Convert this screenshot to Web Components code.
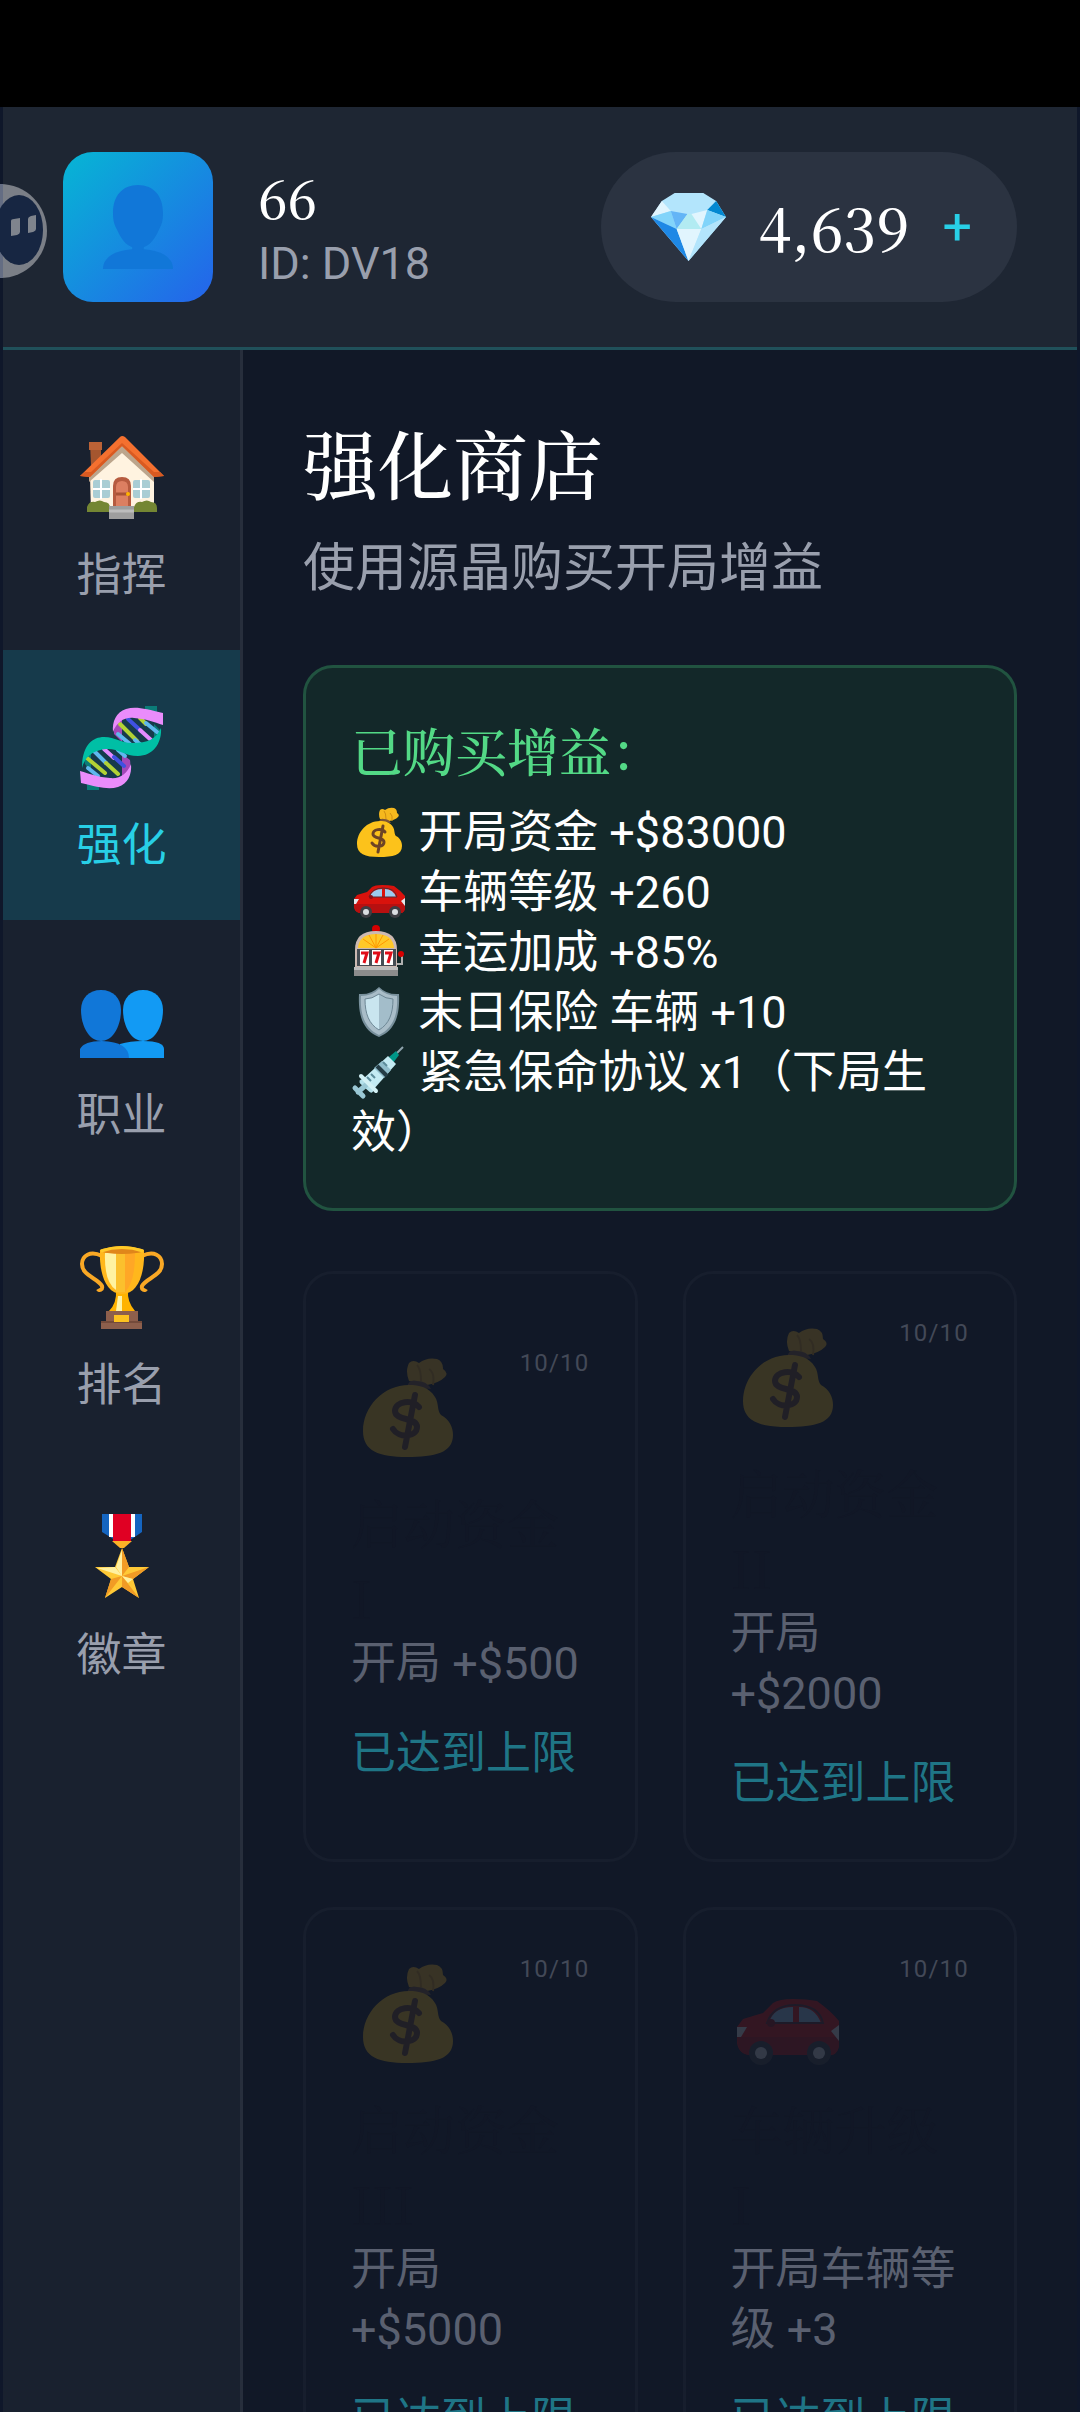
<!DOCTYPE html>
<html lang="zh-CN">
<head>
<meta charset="utf-8">
<meta name="viewport" content="width=device-width, initial-scale=1">
<title>强化商店</title>
<style>
  :root {
    --serif: "Noto Serif CJK SC", "Liberation Serif", "Noto Sans CJK SC", serif;
    --sans: Roboto, "Noto Sans CJK SC", sans-serif;
    --bg: #111827;
    --muted: #999fad;
    --cyan: #28cfe6;
  }
  html, body { height: 100%; }
  body {
    margin: 0;
    background: #0f172a;
    color: #fff;
    font: 45px/60px var(--sans);
  }
</style>
</head>
<body>
<game-app></game-app>

<script>
  const ICONS = {
    user: { box: "0 0 84 84", art: `
      <g fill="#1177d8"><path d="M42 0c19 0 30 11 30 28 0 9-2 12-5 17C61 56 54 63 42 63S23 56 17 45c-3-5-5-8-5-17C12 11 23 0 42 0z"/>
      <path d="M35 60h14v8H35z"/><path d="M0 84C0 70 20 64 42 64s42 6 42 20z"/></g>` },
    gem: { box: "0 0 76 70", art: `
      <path d="M24 1h29l13 8 10 16-38 44L0 25 11 9z" fill="#b3e5fc"/>
      <path d="M11 9l9 10L0 25z" fill="#e1f5fe"/>
      <path d="M0 25l20-6 6 18z" fill="#82d4fa"/>
      <path d="M20 19l17 3-11 15z" fill="#64b5f6"/>
      <path d="M37 22L26 37h25L43 22z" fill="#b2ebf2"/>
      <path d="M41 22l16-4-6 19z" fill="#e1f5fe"/>
      <path d="M66 9l10 16-19-7z" fill="#0288d1"/>
      <path d="M57 18l19 7-25 12z" fill="#81d4fa"/>
      <path d="M0 25l26 12 12 32z" fill="#1e88e5"/>
      <path d="M26 37h25L38 69z" fill="#e1f5fe"/>
      <path d="M51 37l25-12-38 44z" fill="#b3e5fc"/>` },
    home: { box: "0 0 84 84", art: `
      <path d="M10 7h11v22H11z" fill="#a5562f"/><path d="M9 6h13v8H9z" fill="#bb6236"/>
      <path d="M10 40L42 11l32 29v36H11z" fill="#fff3e0"/>
      <path d="M9 46V37L42 8l32 30v8L42 17z" fill="#bca58c"/>
      <path d="M0 40L40 1q2-2 5 0l39 39-10 1-32-31L10 41z" fill="#f4702f"/>
      <path d="M0 40l5-4h6l31-29 32 29h6l4 4-10 1-32-31L10 41z" fill="#d95a21"/>
      <g fill="#a9cdd4"><rect x="13" y="44" width="17" height="18" rx="2"/><rect x="53" y="44" width="17" height="18" rx="2"/></g>
      <path d="M21 43v20M13 53h17M61 43v20M53 53h17" stroke="#fff" stroke-width="2"/>
      <path d="M33 71V50q0-9 9-9t9 9v21z" fill="#b65b3f"/>
      <path d="M36 70V51q0-6 6-6t6 6v19z" fill="#dc7f61"/>
      <path d="M36 58h12" stroke="#a85336" stroke-width="3"/><circle cx="48" cy="58" r="2" fill="#ffb300"/>
      <path d="M7 76v-5q2-6 8-5 5-3 9 0 6 0 6 6v4zM54 76v-5q2-6 8-5 5-3 9 0 6 0 6 6v4z" fill="#748633"/>
      <path d="M29 70h25v13H29z" fill="#9e9e9e"/><path d="M29 75h25" stroke="#bdbdbd" stroke-width="3"/>` },
    dna: { box: "0 0 84 84", art: `
      <path d="M65 0h12v10H65zM7 74h12v10H7z" fill="#0b7c78"/>
      <path d="M5 58q-2-8 6-14v22zM80 24q1 9-6 14V18z" fill="#0b7c78"/>
      <path d="M34 28q-1-12 8-16v24zM50 54q2 12-8 18V48z" fill="#a347b8"/>
      <g stroke-width="4" stroke-linecap="round">
        <path d="M40 18l17 17" stroke="#b2d235"/><path d="M38 28l12 10M55 34l6 5" stroke="#5fb8ee"/>
        <path d="M48 13l13 12" stroke="#3f51e0"/><path d="M60 24l11 10" stroke="#e58bff"/>
        <path d="M60 12l6 6" stroke="#b2d235"/><path d="M66 17l11 9" stroke="#5fb8ee"/>
        <path d="M7 52l18 15" stroke="#b2d235"/><path d="M8 62l10 8" stroke="#5fb8ee"/>
        <path d="M13 44l13 13" stroke="#5fb8ee"/><path d="M26 57l12 11" stroke="#b2d235"/>
        <path d="M24 43l10 9" stroke="#e58bff"/><path d="M34 51l10 9" stroke="#3f51e0"/><path d="M38 44l7 6" stroke="#5fb8ee"/>
      </g>
      <path d="M83 7C66 3 56 0 46 3 36 6 32 16 33 26 37 16 44 11 54 12c12 1 20 4 29 7z" fill="#ea8cfb"/>
      <path d="M1 77c17 4 27 7 37 4s14-13 13-23c-4 10-11 15-21 14-12-1-20-4-30-7z" fill="#ea8cfb"/>
      <path d="M2 62C2 40 12 31 24 31s16 6 28 6c16 0 24-4 29-15 1 14-7 28-23 28-14 0-20-8-32-7S5 50 2 62z" fill="#00bfa5"/>` },
    people: { box: "0 0 84 84", art: `
      <g fill="#129af4"><path d="M63 14c12 0 20 8 20 20 0 16-8 31-20 31S43 50 43 34c0-12 8-20 20-20z"/><path d="M40 82V68q10-3 23-3 21 0 21 8v9z"/></g>
      <g fill="#1177d8"><path d="M21 14c12 0 20 8 20 20 0 16-8 31-20 31S1 50 1 34c0-12 8-20 20-20z"/><path d="M0 82v-9q4-8 22-8 27 1 27 17z"/></g>` },
    trophy: { box: "0 0 84 84", art: `
      <g fill="none" stroke="#f9a825" stroke-width="4"><path d="M22 10C10 4 2 10 2 18c0 12 16 14 20 22 1 4-3 5-4 3M62 10c12-6 20 0 20 8 0 12-16 14-20 22-1 4 3 5 4 3"/></g>
      <path d="M36 44h12q-1 12 7 21H29q8-8 7-21z" fill="#ffb300"/><path d="M38 50h4v15h-6z" fill="#fff3a8"/>
      <path d="M20 4q22-8 44 0c1 24-6 44-22 44S19 28 20 4z" fill="#ffb71c"/>
      <path d="M25 7h11v37Q24 36 25 7z" fill="#fff2a0"/><path d="M36 7h9v39h-9z" fill="#fbc02d"/><path d="M45 7h10q0 30-10 39z" fill="#ffa726"/>
      <ellipse cx="42" cy="5" rx="20" ry="3" fill="#e0861a"/><path d="M21 5q21-7 42 0" fill="none" stroke="#ffca28" stroke-width="3"/>
      <path d="M26 65h32v10h4v8H21v-8h5z" fill="#8d5f4c"/><path d="M21 76h41" stroke="#744b3b" stroke-width="2"/>
      <rect x="34" y="69" width="15" height="7" fill="#fdc21f"/>` },
    medal: { box: "0 2 84 84", art: `
      <path d="M22 0h40v18l-19 13L22 18z" fill="#1565c0"/><path d="M29 0h26v23H29z" fill="#fff"/><path d="M33 0h18v27H33z" fill="#e00023"/>
      <path d="M32 27h20l-8 7h-4z" fill="#fbb227"/>
      <path d="M42 34l7 19 20 0-16 12 6 19-17-11-17 11 6-19L15 53l20 0z" fill="#ffc936"/>
      <path d="M42 34v28l7-9zM69 53L42 62l11 3zM59 84L42 62v11zM25 84l17-22-11 3z" fill="#f19b25"/>
      <path d="M42 36v26l-6-9zM17 54l25 8-7-9zM42 62l6 7 5-4z" fill="#fff0a0"/>` },
    money: { box: "0 0 56 56", art: `
      <path d="M29 16q-2-5 0-9 2-2 5 0 4-3 9-2 3 1 3 5 3 2 1 4-3 3-9 4z" fill="#f5b81d"/>
      <path d="M41 18q1-6-2-8M35 16q0-6-2-8" fill="none" stroke="#cf8e12"/>
      <path d="M28 19q1-4 5-3 5 0 7 4z" fill="#7c5537"/>
      <path d="M29 18c5 0 10 1 13 6 2 3 1 7 3 9 4 2 6 6 6 10 0 9-9 11-23 11S6 51 6 41c0-12 10-23 23-23z" fill="#fcc21b"/>
      <path d="M34 29c-3-4-12-3-12 2s11 3 11 8-9 6-12 1M32 23l-5 26" fill="none" stroke="#6d4425" stroke-width="3" stroke-linecap="round"/>` },
    car: { box: "0 0 56 56", art: `
      <path d="M3 44V36l3-4 10-3 5-5q3-2 10-2t12 1q7 5 11 10v12q-1 5-4 5H10q-6 0-7-6z" fill="#d9120c"/>
      <path d="M3 41h51v5q-1 4-5 4H9q-6-1-6-9z" fill="#b71010"/>
      <path d="M19 34q2-8 12-8v8zM34 26q8 0 11 8H34z" fill="#9ccbee"/>
      <path d="M18 34q3-9 14-9 12 0 14 9z" fill="none" stroke="#5c2930"/>
      <ellipse cx="20" cy="34" rx="2" ry="2" fill="#8f0e15"/>
      <path d="M3 36h5l-3 5H3zM54 35l-4 3 4 5z" fill="#e3e7eb"/>
      <circle cx="15" cy="49" r="6" fill="#3d3d43"/><circle cx="15" cy="49" r="3" fill="#dadde1"/>
      <circle cx="44" cy="49" r="6" fill="#3d3d43"/><circle cx="44" cy="49" r="3" fill="#dadde1"/>` },
    slot: { box: "0 0 56 56", art: `
      <circle cx="25" cy="6" r="4" fill="#d50000"/>
      <path d="M4 46V27Q4 8 25 8t21 19v19z" fill="#ccb9b2"/>
      <path d="M7 25Q8 11 25 11t18 14z" fill="#ffc928"/><path d="M25 25L12 16M25 25l-7-13M25 25V11M25 25l7-13M25 25l13-9" stroke="#ff9800"/>
      <rect x="6" y="26" width="39" height="17" fill="#454c53"/><path d="M9 27h9v15H9zM21 27h9v15h-9zM33 27h9v15h-9z" fill="#fff"/>
      <path d="M10 30h6l-3 10M22 30h6l-3 10M34 30h6l-3 10" fill="none" stroke="#e00d19" stroke-width="3"/>
      <path d="M3 44h44v9H3z" fill="#8c8c8c"/><path d="M3 44h44v3H3z" fill="#bdbdbd"/>
      <path d="M46 41h5V31" fill="none" stroke="#b0b0b0" stroke-width="2"/><circle cx="50" cy="31" r="3" fill="#d50000"/>` },
    shield: { box: "0 0 56 56", art: `
      <path d="M28 4q8 8 20 7c1 20-3 36-20 43C11 47 7 31 8 11q12 1 20-7z" fill="#78909c"/>
      <path d="M28 6q8 7 18 7c1 17-3 32-18 39C13 45 9 30 10 13q11 0 18-7z" fill="#a9bdc8"/>
      <path d="M28 11q7 5 14 5c0 15-4 25-14 31z" fill="#a3bdca"/><path d="M28 11q-7 5-14 5c0 15 4 25 14 31z" fill="#c9e5ef"/>
      <path d="M28 11q7 5 14 5c0 15-4 25-14 31-10-6-14-16-14-31q7 0 14-5z" fill="none" stroke="#6d8795"/>` },
    syringe: { box: "0 0 56 56", art: `
      <path d="M40 16L52 4" stroke="#90a4ae" stroke-width="2"/><path d="M38 14l7-6 3 4-6 8z" fill="#009688"/>
      <path d="M11 39l9 8" stroke="#b3e0ea" stroke-width="5" stroke-linecap="round"/>
      <path d="M15 42L7 49M4 45l8 8" stroke="#9ac8d5" stroke-width="5" stroke-linecap="round"/>
      <path d="M12 36l25-23 8 8-23 26z" fill="#c4ebf3"/><path d="M23 25l8-7 9 9-7 8z" fill="#90bdcb"/>
      <path d="M26 23l10 10" stroke="#243c45" stroke-width="4"/>
      <path d="M10 33l15 15" stroke="#d3f1f5" stroke-width="4" stroke-linecap="round"/>
      <path d="M16 34l4 4M20 31l4 4M32 19l4 4" stroke="#5c8c9a" stroke-width="2"/>` }
  };

  class GameIcon extends HTMLElement {
    constructor() {
      super();
      this.attachShadow({ mode: "open" });
    }

    connectedCallback() {
      const icon = ICONS[this.getAttribute("name")];
      this.shadowRoot.innerHTML = `
        <style>
          :host { display: inline-block; flex: none; width: 56px; height: 56px; }
          svg { display: block; width: 100%; height: 100%; overflow: visible; }
        </style>
        <svg viewBox="${icon.box}" preserveAspectRatio="none" aria-hidden="true">${icon.art}</svg>
      `;
    }
  }

  class StatusBar extends HTMLElement {
    constructor() {
      super();
      this.attachShadow({ mode: "open" }).innerHTML = `
        <style>:host { display: block; flex: none; height: 107px; background: #000; }</style>
      `;
    }
  }

  class PlayerHeader extends HTMLElement {
    constructor() {
      super();
      this.attachShadow({ mode: "open" });
    }

    connectedCallback() {
      this.shadowRoot.innerHTML = `
        <style>
          :host {
            display: flex;
            flex: none;
            align-items: center;
            justify-content: space-between;
            padding: 45px 60px;
            background: #1e2633;
            border-bottom: 3px solid #20505a;
          }
          .player { display: flex; align-items: center; gap: 45px; }
          .avatar {
            display: grid;
            place-items: center;
            width: 150px;
            height: 150px;
            border-radius: 30px;
            background: linear-gradient(135deg, #06b6d4, #2563eb);
          }
          .avatar game-icon { width: 70px; height: 84px; }
          .name { font: 500 52px/74px var(--serif); }
          .id { color: var(--muted); }
          .wallet {
            display: flex;
            align-items: center;
            gap: 33px;
            height: 150px;
            box-sizing: border-box;
            padding: 0 45px 0 50px;
            border-radius: 75px;
            background: #2b3341;
          }
          .wallet game-icon { width: 75px; height: 70px; }
          .amount { font: 500 58px/84px var(--serif); }
          button {
            padding: 0;
            border: 0;
            background: none;
            color: var(--cyan);
            font: 52px/60px var(--sans);
          }
        </style>
        <div class="player">
          <div class="avatar"><game-icon name="user"></game-icon></div>
          <div>
            <div class="name">${this.getAttribute("name")}</div>
            <div class="id">ID: ${this.getAttribute("uid")}</div>
          </div>
        </div>
        <div class="wallet">
          <game-icon name="gem"></game-icon>
          <span class="amount">${this.getAttribute("gems")}</span>
          <button type="button">+</button>
        </div>
      `;
    }
  }

  class NavItem extends HTMLElement {
    constructor() {
      super();
      this.attachShadow({ mode: "open" });
    }

    connectedCallback() {
      this.shadowRoot.innerHTML = `
        <style>
          :host { display: block; color: var(--muted); }
          :host([active]) { background: #163a4b; color: var(--cyan); }
          button {
            display: flex;
            flex-direction: column;
            align-items: center;
            gap: 26px;
            width: 100%;
            padding: 56px 0 44px;
            border: 0;
            background: none;
            color: inherit;
            font: inherit;
          }
          game-icon { width: 84px; height: 84px; }
        </style>
        <button type="button">
          <game-icon name="${this.getAttribute("icon")}"></game-icon>
          <span><slot></slot></span>
        </button>
      `;
    }
  }

  class SideNav extends HTMLElement {
    constructor() {
      super();
      this.attachShadow({ mode: "open" }).innerHTML = `
        <style>
          :host {
            display: block;
            flex: none;
            box-sizing: border-box;
            width: 240px;
            padding-top: 30px;
            background: #19212f;
            border-right: 3px solid #272e3c;
          }
        </style>
        <nav><slot></slot></nav>
      `;
    }
  }

  class OwnedBoons extends HTMLElement {
    constructor() {
      super();
      this.attachShadow({ mode: "open" });
      this.boons = [
        ["money", "开局资金 +$83000"],
        ["car", "车辆等级 +260"],
        ["slot", "幸运加成 +85%"],
        ["shield", "末日保险 车辆 +10"],
        ["syringe", "紧急保命协议 x1（下局生效）"]
      ];
    }

    connectedCallback() {
      this.shadowRoot.innerHTML = `
        <style>
          :host {
            display: block;
            padding: 45px;
            border: 3px solid #215340;
            border-radius: 30px;
            background: #132829;
          }
          h2 {
            margin: 0 0 16px;
            color: #53d986;
            font: 500 52px/74px var(--serif);
          }
          ul { margin: 0; padding: 0; list-style: none; }
          game-icon { vertical-align: top; }
        </style>
        <h2>已购买增益：</h2>
        <ul>
          ${this.boons.map(([icon, text]) => `<li><game-icon name="${icon}"></game-icon> ${text}</li>`).join("")}
        </ul>
      `;
    }
  }

  class BoonCard extends HTMLElement {
    constructor() {
      super();
      this.attachShadow({ mode: "open" });
    }

    connectedCallback() {
      this.shadowRoot.innerHTML = `
        <style>
          :host { display: block; }
          button {
            display: flex;
            flex-direction: column;
            justify-content: center;
            box-sizing: border-box;
            width: 100%;
            height: 100%;
            padding: 45px;
            border: 3px solid #171e2d;
            border-radius: 30px;
            background: none;
            color: #5a6070;
            font: inherit;
            text-align: left;
          }
          .top {
            display: flex;
            justify-content: space-between;
            align-self: stretch;
            align-items: flex-start;
            margin-bottom: 23px;
          }
          game-icon { width: 112px; height: 112px; opacity: 0.17; }
          .count { color: #434957; font-size: 24px; line-height: 28px; letter-spacing: 0.05em; }
          .title { color: #111726; font: 52px/75px var(--serif); }
          .state { margin-top: 30px; color: #1f7586; }
        </style>
        <button type="button" disabled>
          <span class="top">
            <game-icon name="${this.getAttribute("icon")}"></game-icon>
            <span class="count">10/10</span>
          </span>
          <span class="title">${this.getAttribute("title-text")}<br>${this.getAttribute("tier")}</span>
          <span><slot></slot></span>
          <span class="state">已达到上限</span>
        </button>
      `;
    }
  }

  class BoonShop extends HTMLElement {
    constructor() {
      super();
      this.attachShadow({ mode: "open" }).innerHTML = `
        <style>
          :host {
            display: block;
            flex: 1;
            min-width: 0;
            overflow-y: auto;
            scrollbar-width: none;
            padding: 60px;
            box-sizing: border-box;
            background: var(--bg);
          }
          h1 { margin: 0; font: 500 75px/104px var(--serif); }
          p { margin: 16px 0 57px; color: var(--muted); font-size: 52px; line-height: 78px; }
          .grid {
            display: grid;
            grid-template-columns: 1fr 1fr;
            gap: 45px;
            margin-top: 60px;
          }
        </style>
        <h1>强化商店</h1>
        <p>使用源晶购买开局增益</p>
        <owned-boons></owned-boons>
        <div class="grid">
          <boon-card icon="money" title-text="启动资金" tier="I">开局 +$500</boon-card>
          <boon-card icon="money" title-text="启动资金" tier="II">开局 +$2000</boon-card>
          <boon-card icon="money" title-text="启动资金" tier="III">开局 +$5000</boon-card>
          <boon-card icon="car" title-text="车辆升级" tier="I">开局车辆等级 +3</boon-card>
        </div>
      `;
    }
  }

  // assistive ball docked on the left edge, half of it off screen
  class FloatBall extends HTMLElement {
    constructor() {
      super();
      this.attachShadow({ mode: "open" }).innerHTML = `
        <style>
          :host { position: absolute; left: 0; top: 184px; width: 47px; height: 94px; }
          svg { display: block; }
        </style>
        <svg width="47" height="94" viewBox="0 0 47 94" aria-hidden="true">
          <circle cx="0" cy="47" r="47" fill="#7b7f87"/>
          <path d="M0 0h3v94H0z" fill="#646d83"/>
          <ellipse cx="19" cy="46" rx="24" ry="35" fill="#172642"/>
          <path d="M11 37q0-2 3-2l6-1v14q0 2-3 3l-6 1zM28 35q0-2 3-3l5-1v14q0 2-3 3l-5 1z" fill="#7f848d"/>
        </svg>
      `;
    }
  }

  class GameApp extends HTMLElement {
    constructor() {
      super();
      this.attachShadow({ mode: "open" }).innerHTML = `
        <style>
          :host { display: flex; flex-direction: column; position: relative; height: 100vh; overflow: hidden; }
          .app { display: flex; flex-direction: column; flex: 1; min-height: 0; padding: 0 3px; }
          .body { display: flex; flex: 1; min-height: 0; }
        </style>
        <status-bar></status-bar>
        <div class="app">
          <player-header name="66" uid="DV18" gems="4,639"></player-header>
          <div class="body">
            <side-nav>
              <nav-item icon="home">指挥</nav-item>
              <nav-item icon="dna" active>强化</nav-item>
              <nav-item icon="people">职业</nav-item>
              <nav-item icon="trophy">排名</nav-item>
              <nav-item icon="medal">徽章</nav-item>
            </side-nav>
            <boon-shop></boon-shop>
          </div>
        </div>
        <float-ball></float-ball>
      `;
    }
  }

  customElements.define("game-icon", GameIcon);
  customElements.define("status-bar", StatusBar);
  customElements.define("player-header", PlayerHeader);
  customElements.define("nav-item", NavItem);
  customElements.define("side-nav", SideNav);
  customElements.define("owned-boons", OwnedBoons);
  customElements.define("boon-card", BoonCard);
  customElements.define("boon-shop", BoonShop);
  customElements.define("float-ball", FloatBall);
  customElements.define("game-app", GameApp);
</script>
</body>
</html>
